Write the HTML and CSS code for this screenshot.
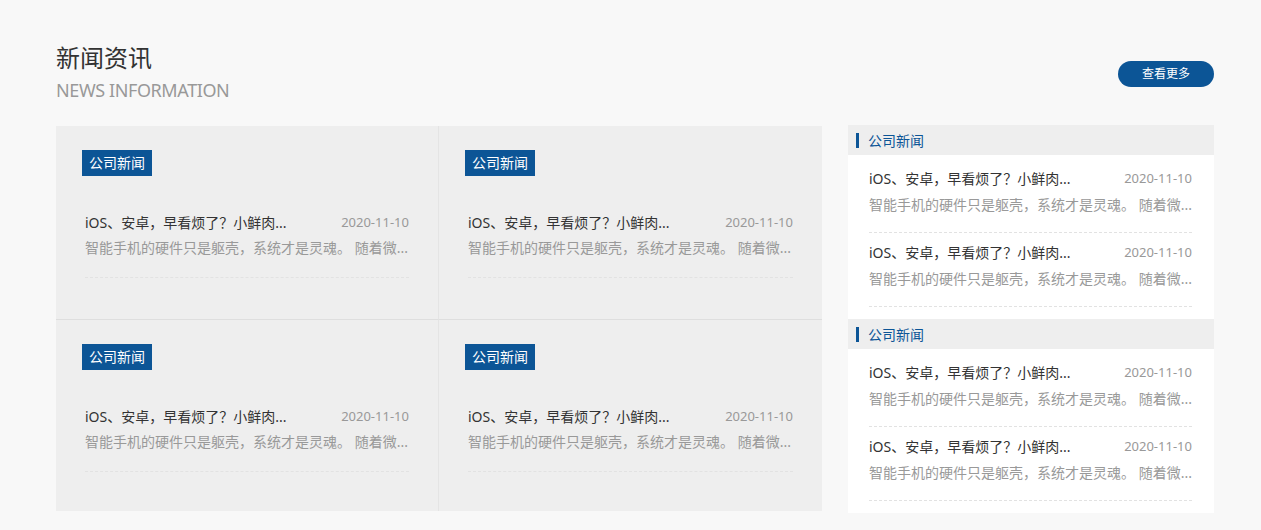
FILE: index.html
```html
<!DOCTYPE html>
<html lang="zh-CN">
<head>
    <meta charset="UTF-8" />
    <meta name="viewport" content="width=device-width, initial-scale=1" />
    <title>新闻资讯</title>
    <link rel="stylesheet" href="styles.css">
</head>
<body>

<section class="news">
    <div class="news-head">
        <div class="news-title">
            <h2>新闻资讯</h2>
            <p>NEWS INFORMATION</p>
        </div>
        <a class="more-btn" href="#">查看更多</a>
    </div>

    <div class="news-body">
        <div class="news-grid">
            <div class="grid-cell">
                <span class="tag">公司新闻</span>
                <div class="news-item">
                    <div class="item-top"><span class="item-title">iOS、安卓，早看烦了？小鲜肉...</span><time>2020-11-10</time></div>
                    <p class="item-desc">智能手机的硬件只是躯壳，系统才是灵魂。 随着微...</p>
                </div>
            </div>
            <div class="grid-cell">
                <span class="tag">公司新闻</span>
                <div class="news-item">
                    <div class="item-top"><span class="item-title">iOS、安卓，早看烦了？小鲜肉...</span><time>2020-11-10</time></div>
                    <p class="item-desc">智能手机的硬件只是躯壳，系统才是灵魂。 随着微...</p>
                </div>
            </div>
            <div class="grid-cell">
                <span class="tag">公司新闻</span>
                <div class="news-item">
                    <div class="item-top"><span class="item-title">iOS、安卓，早看烦了？小鲜肉...</span><time>2020-11-10</time></div>
                    <p class="item-desc">智能手机的硬件只是躯壳，系统才是灵魂。 随着微...</p>
                </div>
            </div>
            <div class="grid-cell">
                <span class="tag">公司新闻</span>
                <div class="news-item">
                    <div class="item-top"><span class="item-title">iOS、安卓，早看烦了？小鲜肉...</span><time>2020-11-10</time></div>
                    <p class="item-desc">智能手机的硬件只是躯壳，系统才是灵魂。 随着微...</p>
                </div>
            </div>
        </div>

        <aside class="side">
            <div class="side-panel">
                <h3 class="side-head">公司新闻</h3>
                <ul class="side-list">
                    <li class="news-item">
                        <div class="item-top"><span class="item-title">iOS、安卓，早看烦了？小鲜肉...</span><time>2020-11-10</time></div>
                        <p class="item-desc">智能手机的硬件只是躯壳，系统才是灵魂。 随着微...</p>
                    </li>
                    <li class="news-item">
                        <div class="item-top"><span class="item-title">iOS、安卓，早看烦了？小鲜肉...</span><time>2020-11-10</time></div>
                        <p class="item-desc">智能手机的硬件只是躯壳，系统才是灵魂。 随着微...</p>
                    </li>
                </ul>
            </div>
            <div class="side-panel">
                <h3 class="side-head">公司新闻</h3>
                <ul class="side-list">
                    <li class="news-item">
                        <div class="item-top"><span class="item-title">iOS、安卓，早看烦了？小鲜肉...</span><time>2020-11-10</time></div>
                        <p class="item-desc">智能手机的硬件只是躯壳，系统才是灵魂。 随着微...</p>
                    </li>
                    <li class="news-item">
                        <div class="item-top"><span class="item-title">iOS、安卓，早看烦了？小鲜肉...</span><time>2020-11-10</time></div>
                        <p class="item-desc">智能手机的硬件只是躯壳，系统才是灵魂。 随着微...</p>
                    </li>
                </ul>
            </div>
        </aside>
    </div>
</section>

</body>
</html>
```

FILE: styles.css
```css
body {
    margin: 0;
    background: #f8f8f8;
    font-family: "Noto Sans", "Noto Sans CJK SC", sans-serif;
    color: #333;
}

.news {
    padding: 40px 47px 0 56px;
}

.news-head {
    display: flex;
    justify-content: space-between;
    align-items: center;
    margin-bottom: 23px;
}

.news-title h2 {
    margin: 0;
    font-size: 24px;
    line-height: 36px;
    font-weight: normal;
    color: #333;
}

.news-title p {
    margin: 2px 0 0;
    font-size: 18px;
    line-height: 24px;
    letter-spacing: -0.4px;
    color: #999;
}

.more-btn {
    display: block;
    width: 96px;
    height: 26px;
    line-height: 26px;
    margin-top: 6px;
    text-align: center;
    background: #0c5596;
    color: #fff;
    font-size: 12px;
    border-radius: 13px;
    text-decoration: none;
}

.news-body {
    display: flex;
    gap: 26px;
    align-items: flex-start;
}

.news-grid {
    width: 766px;
    display: grid;
    grid-template-columns: 1fr 1fr;
    grid-template-rows: 194px 191px;
    background: #eeeeee;
    margin-top: 1px;
}

.grid-cell {
    padding: 24px 29px 0 26px;
}

.grid-cell:nth-child(odd) {
    border-right: 1px solid #e4e4e4;
}

.grid-cell:nth-child(-n+2) {
    border-bottom: 1px solid #dedede;
}

.tag {
    display: inline-block;
    height: 26px;
    line-height: 26px;
    padding: 0 7px;
    background: #0c5596;
    color: #fff;
    font-size: 14px;
}

.grid-cell .news-item {
    margin: 35px 0 0 3px;
    padding-bottom: 17px;
}

.news-item {
    border-bottom: 1px dashed #e2e2e2;
}

.item-top {
    display: flex;
    justify-content: space-between;
    line-height: 24px;
}

.item-title {
    font-size: 14px;
    color: #333;
    white-space: nowrap;
}

.item-top time {
    font-size: 13px;
    line-height: 22px;
    color: #999;
}

.item-desc {
    margin: 1px 0 0;
    font-size: 14px;
    line-height: 24px;
    color: #999;
    white-space: nowrap;
    overflow: hidden;
}

.side {
    width: 366px;
    background: #fff;
}

.side-head {
    display: flex;
    align-items: center;
    gap: 9px;
    height: 30px;
    margin: 0;
    padding-left: 8px;
    background: #eeeeee;
    font-size: 14px;
    font-weight: normal;
    color: #0c5596;
}

.side-head::before {
    content: "";
    width: 3px;
    height: 15px;
    background: #0c5596;
}

.side-list {
    list-style: none;
    margin: 0;
    padding: 4px 22px 12px 21px;
}

.side-list .news-item {
    padding: 8px 0 15px;
}

.side-list .item-desc {
    margin-top: 2px;
}
```
